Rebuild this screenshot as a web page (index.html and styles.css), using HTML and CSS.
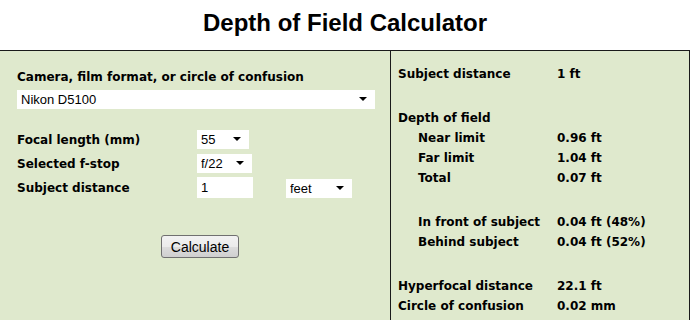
FILE: index.html
```html
<!DOCTYPE html>
<html>
<head>
<meta charset="utf-8">
<title>Depth of Field Calculator</title>
<link rel="stylesheet" href="styles.css">
</head>
<body>
<h1 class="title">Depth of Field Calculator</h1>
<div class="box">
  <div class="left">
    <div class="lbl cam-lbl">Camera, film format, or circle of confusion</div>
    <span class="sel sel-cam"><select><option>Nikon D5100</option></select><i class="arr"></i></span>
    <div class="form">
      <div class="frow">
        <span class="lbl flbl">Focal length (mm)</span>
        <span class="sel sel-fl"><select><option>55</option></select><i class="arr"></i></span>
      </div>
      <div class="frow">
        <span class="lbl flbl">Selected f-stop</span>
        <span class="sel sel-fs"><select><option>f/22</option></select><i class="arr"></i></span>
      </div>
      <div class="frow">
        <span class="lbl flbl">Subject distance</span>
        <input class="inp" type="text" value="1">
        <span class="sel sel-unit"><select><option>feet</option></select><i class="arr"></i></span>
      </div>
    </div>
    <div class="btnrow"><button class="btn">Calculate</button></div>
  </div>
  <div class="right">
    <div class="r"><span class="k">Subject distance</span><span class="v">1 ft</span></div>
    <div class="gap"></div>
    <div class="r"><span class="k">Depth of field</span><span class="v"></span></div>
    <div class="r"><span class="k in">Near limit</span><span class="v">0.96 ft</span></div>
    <div class="r"><span class="k in">Far limit</span><span class="v">1.04 ft</span></div>
    <div class="r"><span class="k in">Total</span><span class="v">0.07 ft</span></div>
    <div class="gap"></div>
    <div class="r"><span class="k in">In front of subject</span><span class="v">0.04 ft (48%)</span></div>
    <div class="r"><span class="k in">Behind subject</span><span class="v">0.04 ft (52%)</span></div>
    <div class="gap"></div>
    <div class="r"><span class="k">Hyperfocal distance</span><span class="v">22.1 ft</span></div>
    <div class="r"><span class="k">Circle of confusion</span><span class="v">0.02 mm</span></div>
  </div>
</div>
</body>
</html>
```
FILE: styles.css
```css
html, body {
  margin: 0;
  padding: 0;
  background: #ffffff;
}
body {
  font-family: "DejaVu Sans", Verdana, sans-serif;
  color: #000;
  overflow: hidden;
  height: 320px;
}
.title {
  margin: 0;
  height: 50px;
  line-height: 46px;
  text-align: center;
  font-family: "Liberation Sans", Arial, sans-serif;
  font-size: 24px;
  font-weight: bold;
}
.box {
  display: flex;
  margin-left: -1px;
  width: 691px;
  box-sizing: border-box;
  height: 270px;
  border: 1px solid #1a1a1a;
  border-bottom: none;
  background: #dfe9cd;
}
.left {
  width: 391px;
  box-sizing: border-box;
  border-right: 1px solid #1a1a1a;
  padding: 18px 0 0 17px;
}
.right {
  flex: 1;
  padding: 13px 0 0 7px;
}
.lbl {
  font-size: 12px;
  font-weight: bold;
  line-height: 16px;
}
.cam-lbl {
  height: 20px;
}
.sel {
  position: relative;
  display: inline-block;
  height: 19px;
  vertical-align: top;
}
.sel select {
  -webkit-appearance: none;
  appearance: none;
  border: none;
  outline: none;
  background: #fff;
  height: 100%;
  width: 100%;
  padding: 0 0 0 4px;
  margin: 0;
  font-family: "Liberation Sans", Arial, sans-serif;
  font-size: 13px;
  color: #000;
  border-radius: 0;
}
.arr {
  position: absolute;
  right: 8px;
  top: 8px;
  width: 0;
  height: 0;
  border-left: 4px solid transparent;
  border-right: 4px solid transparent;
  border-top: 4px solid #000;
}
.sel-cam {
  width: 358px;
  height: 19px;
  display: block;
}
.form {
  margin-top: 21px;
  display: flex;
  flex-direction: column;
  gap: 5px;
}
.frow {
  display: flex;
  align-items: center;
  height: 19px;
}
.flbl {
  width: 180px;
  padding-top: 2px;
}
.sel-fl { width: 52px; }
.sel-fs { width: 55px; }
.inp {
  width: 56px;
  height: 21px;
  box-sizing: border-box;
  border: none;
  outline: none;
  padding: 0 0 0 4px;
  margin: 1px 33px 0 0;
  font-family: "Liberation Sans", Arial, sans-serif;
  font-size: 13px;
  background: #fff;
}
.sel-unit { width: 66px; margin-top: 1px; }
.btnrow {
  margin-top: 39px;
  padding-left: 144px;
}
.btn {
  width: 78px;
  height: 23px;
  padding: 0;
  font-family: "Liberation Sans", Arial, sans-serif;
  font-size: 14px;
  color: #000;
  border: 1px solid #707070;
  border-radius: 3px;
  background: linear-gradient(#f2f2f2, #ebebeb 50%, #dddddd 51%, #cfcfcf);
}
.r {
  display: flex;
  height: 20px;
  align-items: center;
  font-size: 12px;
  font-weight: bold;
}
.k {
  width: 159px;
}
.k.in {
  padding-left: 20px;
  width: 139px;
}
.gap {
  height: 24px;
}
```
